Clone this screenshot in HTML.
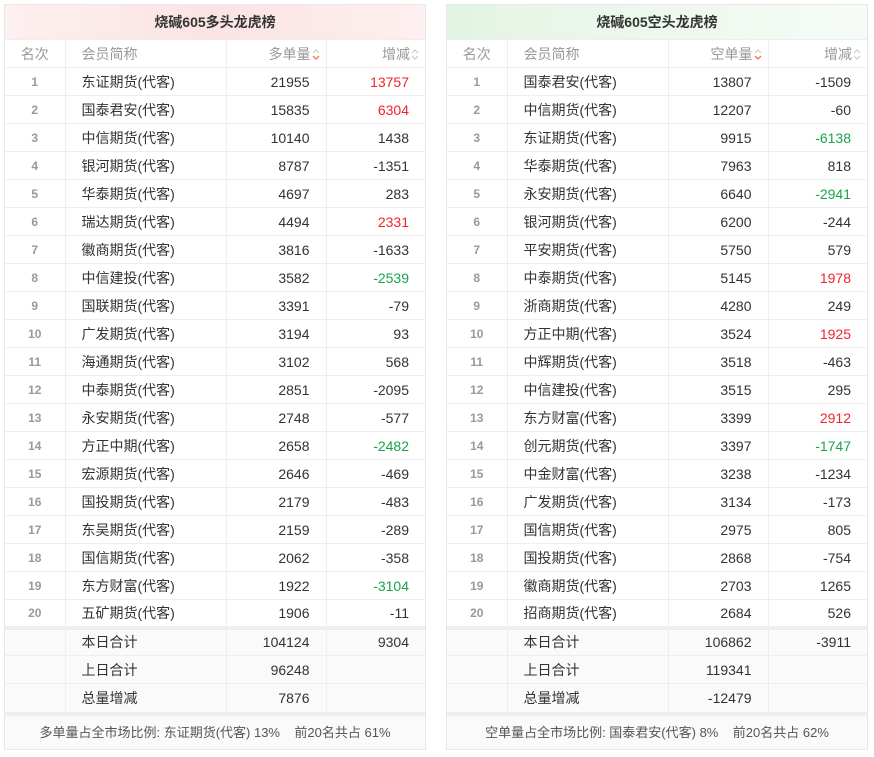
<!DOCTYPE html>
<html><head><meta charset="utf-8"><style>
*{box-sizing:border-box;margin:0;padding:0}
body{width:874px;height:757px;background:#fff;font-family:"Liberation Sans","Noto Sans CJK SC",sans-serif;font-size:14px;color:#333;position:relative}
.p{position:absolute;top:4px;width:422px;border:1px solid #e8e8e8}
.l{left:4px}.r{left:446px}
.h{height:34px;line-height:34px;text-align:center;font-weight:bold;font-size:14px;color:#333}
.l .h{background:linear-gradient(90deg,#fdf0f0,#fbe3e3 50%,#fdf0f0)}
.r .h{background:linear-gradient(90deg,#e3f4e3,#eef8ee 50%,#f6fbf6)}
table{border-collapse:collapse;width:100%;table-layout:fixed}
td{height:28px;border-right:1px solid #eee;border-top:1px solid #eee;padding:0 16px;white-space:nowrap}
td:last-child{border-right:none}
td:first-child{text-align:center;color:#999;font-weight:bold;font-size:12px;padding:0}
td:nth-child(3),td:nth-child(4){text-align:right}
tr.th td{color:#999;font-weight:normal;font-size:14px}
tr.th td:nth-child(3),tr.th td:nth-child(4){padding-right:6px}
tr.th td:first-child{font-size:14px;font-weight:normal}
svg{vertical-align:-2px;margin-left:1px}
.R{color:#f5222d}.G{color:#1aa34a}
tr.s td{background:#fafafa}
tr.s1 td{border-top:4px solid #eee}
.f{height:37px;line-height:33px;text-align:center;background:#fafafa;border-top:4px solid #eee;font-size:13px;color:#555}
</style></head><body>
<div class="p l"><div class="h">烧碱605多头龙虎榜</div>
<table><colgroup><col style="width:60px"><col style="width:161px"><col style="width:100px"><col></colgroup>
<tr class="th"><td>名次</td><td>会员简称</td><td>多单量<svg width="8" height="13" viewBox="0 0 8 13"><path d="M1 5L4 2L7 5" fill="none" stroke="#ccc" stroke-width="1.2"/><path d="M1 8L4 11L7 8" fill="none" stroke="#f56c2c" stroke-width="1.2"/></svg></td><td>增减<svg width="8" height="13" viewBox="0 0 8 13"><path d="M1 5L4 2L7 5M1 8L4 11L7 8" fill="none" stroke="#ccc" stroke-width="1.2"/></svg></td></tr>
<tr><td>1</td><td>东证期货(代客)</td><td>21955</td><td class="R">13757</td></tr>
<tr><td>2</td><td>国泰君安(代客)</td><td>15835</td><td class="R">6304</td></tr>
<tr><td>3</td><td>中信期货(代客)</td><td>10140</td><td>1438</td></tr>
<tr><td>4</td><td>银河期货(代客)</td><td>8787</td><td>-1351</td></tr>
<tr><td>5</td><td>华泰期货(代客)</td><td>4697</td><td>283</td></tr>
<tr><td>6</td><td>瑞达期货(代客)</td><td>4494</td><td class="R">2331</td></tr>
<tr><td>7</td><td>徽商期货(代客)</td><td>3816</td><td>-1633</td></tr>
<tr><td>8</td><td>中信建投(代客)</td><td>3582</td><td class="G">-2539</td></tr>
<tr><td>9</td><td>国联期货(代客)</td><td>3391</td><td>-79</td></tr>
<tr><td>10</td><td>广发期货(代客)</td><td>3194</td><td>93</td></tr>
<tr><td>11</td><td>海通期货(代客)</td><td>3102</td><td>568</td></tr>
<tr><td>12</td><td>中泰期货(代客)</td><td>2851</td><td>-2095</td></tr>
<tr><td>13</td><td>永安期货(代客)</td><td>2748</td><td>-577</td></tr>
<tr><td>14</td><td>方正中期(代客)</td><td>2658</td><td class="G">-2482</td></tr>
<tr><td>15</td><td>宏源期货(代客)</td><td>2646</td><td>-469</td></tr>
<tr><td>16</td><td>国投期货(代客)</td><td>2179</td><td>-483</td></tr>
<tr><td>17</td><td>东吴期货(代客)</td><td>2159</td><td>-289</td></tr>
<tr><td>18</td><td>国信期货(代客)</td><td>2062</td><td>-358</td></tr>
<tr><td>19</td><td>东方财富(代客)</td><td>1922</td><td class="G">-3104</td></tr>
<tr><td>20</td><td>五矿期货(代客)</td><td>1906</td><td>-11</td></tr>
<tr class="s s1"><td></td><td>本日合计</td><td>104124</td><td>9304</td></tr>
<tr class="s"><td></td><td>上日合计</td><td>96248</td><td></td></tr>
<tr class="s"><td></td><td>总量增减</td><td>7876</td><td></td></tr>
</table>
<div class="f">多单量占全市场比例: 东证期货(代客) 13% &nbsp;&nbsp; 前20名共占 61%</div></div>

<div class="p r"><div class="h">烧碱605空头龙虎榜</div>
<table><colgroup><col style="width:60px"><col style="width:161px"><col style="width:100px"><col></colgroup>
<tr class="th"><td>名次</td><td>会员简称</td><td>空单量<svg width="8" height="13" viewBox="0 0 8 13"><path d="M1 5L4 2L7 5" fill="none" stroke="#ccc" stroke-width="1.2"/><path d="M1 8L4 11L7 8" fill="none" stroke="#f56c2c" stroke-width="1.2"/></svg></td><td>增减<svg width="8" height="13" viewBox="0 0 8 13"><path d="M1 5L4 2L7 5M1 8L4 11L7 8" fill="none" stroke="#ccc" stroke-width="1.2"/></svg></td></tr>
<tr><td>1</td><td>国泰君安(代客)</td><td>13807</td><td>-1509</td></tr>
<tr><td>2</td><td>中信期货(代客)</td><td>12207</td><td>-60</td></tr>
<tr><td>3</td><td>东证期货(代客)</td><td>9915</td><td class="G">-6138</td></tr>
<tr><td>4</td><td>华泰期货(代客)</td><td>7963</td><td>818</td></tr>
<tr><td>5</td><td>永安期货(代客)</td><td>6640</td><td class="G">-2941</td></tr>
<tr><td>6</td><td>银河期货(代客)</td><td>6200</td><td>-244</td></tr>
<tr><td>7</td><td>平安期货(代客)</td><td>5750</td><td>579</td></tr>
<tr><td>8</td><td>中泰期货(代客)</td><td>5145</td><td class="R">1978</td></tr>
<tr><td>9</td><td>浙商期货(代客)</td><td>4280</td><td>249</td></tr>
<tr><td>10</td><td>方正中期(代客)</td><td>3524</td><td class="R">1925</td></tr>
<tr><td>11</td><td>中辉期货(代客)</td><td>3518</td><td>-463</td></tr>
<tr><td>12</td><td>中信建投(代客)</td><td>3515</td><td>295</td></tr>
<tr><td>13</td><td>东方财富(代客)</td><td>3399</td><td class="R">2912</td></tr>
<tr><td>14</td><td>创元期货(代客)</td><td>3397</td><td class="G">-1747</td></tr>
<tr><td>15</td><td>中金财富(代客)</td><td>3238</td><td>-1234</td></tr>
<tr><td>16</td><td>广发期货(代客)</td><td>3134</td><td>-173</td></tr>
<tr><td>17</td><td>国信期货(代客)</td><td>2975</td><td>805</td></tr>
<tr><td>18</td><td>国投期货(代客)</td><td>2868</td><td>-754</td></tr>
<tr><td>19</td><td>徽商期货(代客)</td><td>2703</td><td>1265</td></tr>
<tr><td>20</td><td>招商期货(代客)</td><td>2684</td><td>526</td></tr>
<tr class="s s1"><td></td><td>本日合计</td><td>106862</td><td>-3911</td></tr>
<tr class="s"><td></td><td>上日合计</td><td>119341</td><td></td></tr>
<tr class="s"><td></td><td>总量增减</td><td>-12479</td><td></td></tr>
</table>
<div class="f">空单量占全市场比例: 国泰君安(代客) 8% &nbsp;&nbsp; 前20名共占 62%</div></div>
</body></html>
